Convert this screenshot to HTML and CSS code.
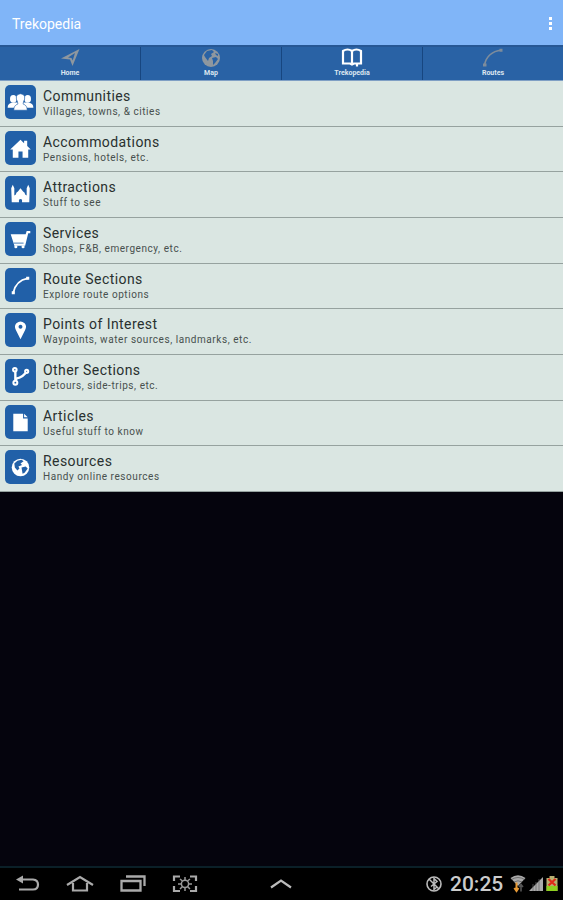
FILE: index.html
```html
<!DOCTYPE html>
<html lang="en">
<head>
    <meta charset="UTF-8">
    <meta name="viewport" content="width=device-width, initial-scale=1.0">
    <title>Trekopedia</title>
    <link rel="stylesheet" href="styles.css">
</head>
<body>
    <header class="topbar">
        <h1>Trekopedia</h1>
        <div class="more"><i></i><i></i><i></i></div>
    </header>

    <nav class="tabs">
        <div class="tab">
            <svg width="20" height="20" viewBox="0 0 20 20"><path d="M19.500 2 L12.500 19 L10 12.500 L1 11.500 Z M15 6 L8 10.500 L11.500 11 L12.700 13.500 Z" fill="#8e979f" fill-rule="evenodd"/></svg>
            <span>Home</span>
        </div>
        <div class="tab">
            <svg width="20" height="20" viewBox="0 0 20 20"><circle cx="10" cy="11" r="9" fill="#8e979f"/><path d="M6 4 L11 3 L13 5 L10 7 L11 9 L8 11 L7 14 L4 10 L3 8 Z M11 11 L15 10 L17 12 L14 16 L12 18 L12 14 Z M14 6 L17 7 L17 9 L15 8 Z" fill="#2962a5"/></svg>
            <span>Map</span>
        </div>
        <div class="tab active">
            <svg width="22" height="20" viewBox="0 0 22 20"><path d="M2 16.500 V4 Q6.500 1 11 4 Q15.500 1 20 4 V16.500 H13 L11 17.500 L9 16.500 Z M11 4 V16 M16 16 V19.500" fill="none" stroke="#fff" stroke-width="2.2"/></svg>
            <span>Trekopedia</span>
        </div>
        <div class="tab">
            <svg width="20" height="20" viewBox="0 0 20 20"><path d="M1.500 18 Q4 5 18.500 3" fill="none" stroke="#7d8c9c" stroke-width="1.600"/><path d="M0 16.500 h3.500 v3 h-3.500 z M16.500 1.800 h3 v3 h-3 z" fill="#7d8c9c"/></svg>
            <span>Routes</span>
        </div>
    </nav>

    <main class="list">
        <div class="row">
            <div class="icon"><svg viewBox="0 0 30 33"><g fill="#fff"><ellipse cx="8" cy="13.500" rx="3.200" ry="3.700"/><ellipse cx="22" cy="13.500" rx="3.200" ry="3.700"/><path d="M2.500 22 Q2.500 17.500 8 17 H22 Q27.500 17.500 27.500 22 Z"/></g><path d="M8.500 24.500 Q8.500 19.500 12.500 18.500 L12 16 Q10.500 14 11 11 Q12 8.500 15 8.500 Q18 8.500 19 11 Q19.500 14 18 16 L17.500 18.500 Q21.500 19.500 21.500 24.500 Z" fill="#fff" stroke="#2160a8" stroke-width="0.600"/></svg></div>
            <div class="text"><h2>Communities</h2><p>Villages, towns, &amp; cities</p></div>
        </div>
        <div class="row">
            <div class="icon"><svg viewBox="0 0 30 33"><path d="M15 8.500 L18.500 12 V9.500 H21.500 V14.500 L25 18 H22.500 V26 H17 V20 H13 V26 H7.500 V18 H5 Z" fill="#fff"/></svg></div>
            <div class="text"><h2>Accommodations</h2><p>Pensions, hotels, etc.</p></div>
        </div>
        <div class="row">
            <div class="icon"><svg viewBox="0 0 30 33"><path d="M7.500 8.500 L9 12 V19 L10.500 18 Q10.500 16 12.500 15 L15 12 L17.500 15 Q19.500 16 19.500 18 L21 19 V12 L22.500 8.500 L24 12 L23.500 25.500 H16.500 V23 Q15 21.500 13.500 23 V25.500 H6.500 L6 12 Z" fill="#fff"/></svg></div>
            <div class="text"><h2>Attractions</h2><p>Stuff to see</p></div>
        </div>
        <div class="row">
            <div class="icon"><svg viewBox="0 0 30 33"><path d="M5.500 12 H20 L21 8.800 H24.500 V11 H22.500 L19.500 23 H9 L8.500 21 Z" fill="#fff"/><path d="M8.500 20.500 H18" stroke="#2160a8" stroke-width="0.800"/><circle cx="10.500" cy="24" r="1.500" fill="#fff"/><circle cx="17.500" cy="24" r="1.500" fill="#fff"/></svg></div>
            <div class="text"><h2>Services</h2><p>Shops, F&amp;B, emergency, etc.</p></div>
        </div>
        <div class="row">
            <div class="icon"><svg viewBox="0 0 30 33"><path d="M8 24 Q10.500 12 22 10" fill="none" stroke="#fff" stroke-width="1.700"/><path d="M6.500 22.500 h3 v3 h-3 z M20.500 8.500 h3 v3 h-3 z" fill="#fff"/></svg></div>
            <div class="text"><h2>Route Sections</h2><p>Explore route options</p></div>
        </div>
        <div class="row">
            <div class="icon"><svg viewBox="0 0 30 33"><path d="M15 25.500 L10.500 16.500 Q8.500 12.500 11 10 Q15 6.500 19 10 Q21.500 12.500 19.500 16.500 Z M15 11.500 a1.900 1.900 0 1 0 0.010 0 Z" fill="#fff" fill-rule="evenodd"/></svg></div>
            <div class="text"><h2>Points of Interest</h2><p>Waypoints, water sources, landmarks, etc.</p></div>
        </div>
        <div class="row">
            <div class="icon"><svg viewBox="0 0 30 33"><g fill="none" stroke="#fff" stroke-width="2"><path d="M10 12 V21 M10.500 20 Q11 18.500 14 18 Q17 17 20 13.500" stroke-width="2.300"/><circle cx="9.500" cy="10.500" r="1.700"/><circle cx="10" cy="23" r="1.900"/><circle cx="21" cy="12" r="1.500"/></g></svg></div>
            <div class="text"><h2>Other Sections</h2><p>Detours, side-trips, etc.</p></div>
        </div>
        <div class="row">
            <div class="icon"><svg viewBox="0 0 30 33"><path d="M8 8.500 H17.500 V13 H22 V25.500 H8 Z M18.500 8.500 L22 12 H18.500 Z" fill="#fff"/></svg></div>
            <div class="text"><h2>Articles</h2><p>Useful stuff to know</p></div>
        </div>
        <div class="row">
            <div class="icon"><svg viewBox="0 0 30 33"><circle cx="15" cy="17" r="8.500" fill="#fff"/><path d="M12 10.500 L16 9.500 L18 11 L15 13 L16.500 14.500 L13 16 L14 18 L12 20 L9.500 17 L9 13 Z M16 17 L20 16 L22 18 L19 22 L17 23 Z" fill="#2160a8"/></svg></div>
            <div class="text"><h2>Resources</h2><p>Handy online resources</p></div>
        </div>
    </main>

    <footer class="navbar">
        <div class="keys">
            <svg width="24" height="20" viewBox="0 0 24 20"><path d="M5 5.500 H17 Q22 6 22 10.500 Q22 15.500 17 15.500 H3" fill="none" stroke="#aaa" stroke-width="2.200"/><path d="M0 5.500 L7 1.500 V9.500 Z" fill="#aaa"/></svg>
            <svg width="28" height="20" viewBox="0 0 28 20"><path d="M1 11 L14 3 L27 11 M7 9 V16.500 H21 V9" fill="none" stroke="#aaa" stroke-width="2.200"/></svg>
            <svg width="26" height="20" viewBox="0 0 26 20"><path d="M1.500 7 H20.500 V16.500 H1.500 Z M6 2.500 H24.500 V12" fill="none" stroke="#aaa" stroke-width="2.300"/></svg>
            <svg width="26" height="20" viewBox="0 0 26 20"><path d="M2 7 V2.500 H8 M18 2.500 H24 V7 M24 12 V17 H18 M8 17 H2 V12" fill="none" stroke="#aaa" stroke-width="2.200"/><circle cx="13" cy="9.800" r="3.600" fill="none" stroke="#999" stroke-width="1.500"/><path d="M13 3 V6 M13 13.500 V17 M6 10 H9 M17 10 H20 M8 5 L10.500 7 M18 5 L15.500 7 M8 15 L10.500 12.500 M18 15 L15.500 12.500" stroke="#999" stroke-width="1.500"/></svg>
        </div>
        <svg class="up" width="22" height="20" viewBox="0 0 22 20"><path d="M1 13.500 L11 6.500 L21 13.500" fill="none" stroke="#bbb" stroke-width="2.200"/></svg>
        <div class="status">
            <svg width="18" height="20" viewBox="0 0 18 20"><circle cx="9" cy="10" r="7" fill="none" stroke="#bbb" stroke-width="1.600"/><path d="M4 5 L14 15 M6 12.500 L12 7.500 L9 4.500 V15.500 L12 13" fill="none" stroke="#bbb" stroke-width="1.500"/></svg>
            <span class="clock">20:25</span>
            <svg width="16" height="20" viewBox="0 0 16 20"><path d="M0.500 4 Q8 -1.500 15.500 4 L8 12 Z" fill="#aaa"/><path d="M1.500 5.500 Q8 1.500 14.500 5.500 M4 8 Q8 5.500 12 8" fill="none" stroke="#555" stroke-width="0.700"/><path d="M6.500 8.500 V16.500 M4.300 14 L6.500 17 L8.500 14" fill="none" stroke="#e89a35" stroke-width="2"/><path d="M11 17.500 V11 M9 13 L11 10.500 L13 13" fill="none" stroke="#555" stroke-width="1.600"/></svg>
            <svg width="14" height="20" viewBox="0 0 14 20"><path d="M0 17 L14 3 V17 Z" fill="#aaa"/><path d="M4 10 V17 M7 8 V17 M10 5 V17" stroke="#666" stroke-width="0.700"/></svg>
            <svg width="12" height="20" viewBox="0 0 12 20"><path d="M3.500 2 H8.500 V4 H11.500 V17 H0.500 V4 H3.500 Z" fill="#b8b070"/><path d="M0.500 12 H11.500 V17 H0.500 Z" fill="#8fd020"/><path d="M2.500 5 L9.500 11.500 M9.500 5 L2.500 11.500" stroke="#e02a18" stroke-width="2.300"/></svg>
        </div>
    </footer>
</body>
</html>
```

FILE: styles.css
```css
* {
    box-sizing: border-box;
}

body {
    margin: 0;
    height: 900px;
    display: flex;
    flex-direction: column;
    background-color: #05040d;
    font-family: Roboto, "Liberation Sans", sans-serif;
    overflow: hidden;
}

h1, h2, p {
    margin: 0;
    font-weight: normal;
    white-space: nowrap;
}

svg {
    display: block;
    flex: none;
}

.topbar {
    height: 45px;
    flex: none;
    display: flex;
    align-items: center;
    justify-content: space-between;
    padding: 2px 11px 0 12px;
    background-color: #80b5f8;
}

.topbar h1 {
    font-size: 14px;
    line-height: 18px;
    color: #fff;
}

.more {
    display: flex;
    flex-direction: column;
    gap: 2px;
}

.more i {
    width: 3px;
    height: 3px;
    background-color: #fff;
}

.tabs {
    height: 35px;
    flex: none;
    display: flex;
    background-color: #2962a5;
    border-top: 2px solid #265795;
}

.tab {
    flex: 1;
    display: flex;
    flex-direction: column;
    align-items: center;
    border-right: 1px solid #174680;
}

.tab:last-child {
    border-right: none;
}

.tab span {
    font-size: 7px;
    font-weight: bold;
    line-height: 9px;
    margin-top: 2px;
    color: #dce6f0;
}

.list {
    flex: none;
    border-top: 1px solid #7f9fc4;
    background-color: #dae6e2;
}

.row {
    height: 45.67px;
    display: flex;
    padding: 4px 0 0 5px;
    border-bottom: 1px solid #96a29f;
}

.icon {
    width: 31px;
    height: 34px;
    flex: none;
    border-radius: 5px;
    background-color: #2160a8;
}

.icon svg {
    width: 31px;
    height: 34px;
}

.text {
    padding: 3px 0 0 7px;
}

.text h2 {
    font-size: 14px;
    line-height: 17px;
    letter-spacing: 0.42px;
    color: #29302f;
}

.text p {
    font-size: 10px;
    line-height: 13px;
    letter-spacing: 0.56px;
    color: #48504e;
}

.navbar {
    height: 34px;
    margin-top: auto;
    flex: none;
    display: flex;
    align-items: center;
    padding: 0 5px 0 16px;
    background-color: #000;
    border-top: 2px solid #0b2028;
}

.keys {
    display: flex;
    width: 182px;
    justify-content: space-between;
}

.up {
    margin-left: 72px;
    margin-right: auto;
}

.status {
    display: flex;
    align-items: center;
    gap: 3px;
}

.clock {
    width: 53px;
    margin: 0 4px;
    font-size: 21px;
    line-height: 24px;
    font-weight: 500;
    color: #ccc;
}
```
